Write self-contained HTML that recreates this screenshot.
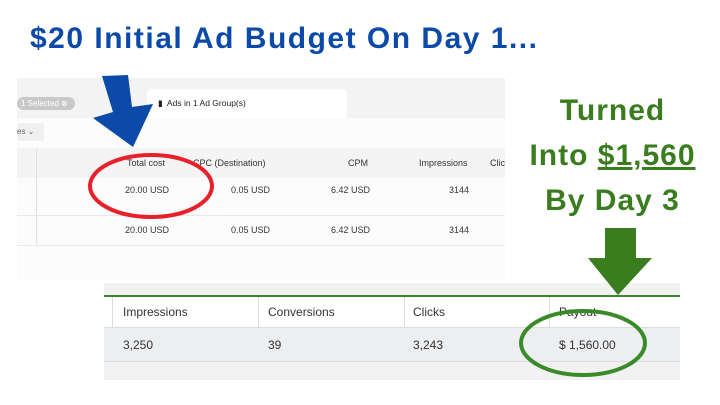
<html><head><style>
body{margin:0;width:720px;height:405px;background:#fff;position:relative;overflow:hidden;font-family:"Liberation Sans",sans-serif}
.a{position:absolute}
.t{font-size:9px;color:#333}
.b{font-size:12px;color:#333}
</style></head><body>
<div class="a" style="left:17px;top:78px;width:488px;height:40px;background:#f3f3f3"></div>
<div class="a" style="left:17px;top:97px;width:58px;height:13px;border-radius:7px;background:#c9c9c9;color:#fff;font-size:8px;line-height:13px;padding-left:4px;box-sizing:border-box">1 Selected ⊗</div>
<div class="a" style="left:147px;top:89px;width:200px;height:29px;background:#fff;border-radius:5px 5px 0 0"></div>
<div class="a t" style="left:158px;top:98px;font-size:8.5px;color:#222">▮&nbsp; Ads in 1 Ad Group(s)</div>
<div class="a" style="left:17px;top:118px;width:488px;height:162px;background:#fcfcfc"></div>
<div class="a" style="left:17px;top:123px;width:27px;height:18px;background:#f0f0f0;border-radius:3px;font-size:8px;color:#666;line-height:18px">es ⌄</div>
<div class="a" style="left:17px;top:148px;width:488px;height:30px;background:#f4f4f4"></div>
<div class="a" style="left:36px;top:148px;width:1px;height:97px;background:#e2e2e2"></div>
<div class="a" style="left:17px;top:215px;width:488px;height:1px;background:#e8e8e8"></div>
<div class="a" style="left:17px;top:245px;width:488px;height:1px;background:#e8e8e8"></div>
<div class="a t" style="left:127px;top:158px">Total cost</div>
<div class="a t" style="left:193px;top:158px">CPC (Destination)</div>
<div class="a t" style="left:348px;top:158px">CPM</div>
<div class="a t" style="left:419px;top:158px">Impressions</div>
<div class="a t" style="left:490px;top:158px">Clic</div>
<div class="a t" style="left:125px;top:185px">20.00 USD</div>
<div class="a t" style="left:231px;top:185px">0.05 USD</div>
<div class="a t" style="left:331px;top:185px">6.42 USD</div>
<div class="a t" style="left:449px;top:185px">3144</div>
<div class="a t" style="left:125px;top:225px">20.00 USD</div>
<div class="a t" style="left:231px;top:225px">0.05 USD</div>
<div class="a t" style="left:331px;top:225px">6.42 USD</div>
<div class="a t" style="left:449px;top:225px">3144</div>

<div class="a" style="left:104px;top:283px;width:576px;height:97px;background:#f2f2f2"></div>
<div class="a" style="left:104px;top:295px;width:576px;height:2px;background:#3a8a2a"></div>
<div class="a" style="left:104px;top:297px;width:576px;height:30px;background:#fff"></div>
<div class="a" style="left:104px;top:327px;width:576px;height:33px;background:#edeef0;border-top:1px solid #ddd;border-bottom:1px solid #ddd"></div>
<div class="a" style="left:112px;top:297px;width:1px;height:30px;background:#ddd"></div>
<div class="a" style="left:258px;top:297px;width:1px;height:30px;background:#ddd"></div>
<div class="a" style="left:404px;top:297px;width:1px;height:30px;background:#ddd"></div>
<div class="a" style="left:549px;top:297px;width:1px;height:30px;background:#ddd"></div>
<div class="a b" style="left:123px;top:305px">Impressions</div>
<div class="a b" style="left:268px;top:305px">Conversions</div>
<div class="a b" style="left:413px;top:305px">Clicks</div>
<div class="a b" style="left:559px;top:305px">Payout</div>
<div class="a b" style="left:123px;top:338px">3,250</div>
<div class="a b" style="left:268px;top:338px">39</div>
<div class="a b" style="left:413px;top:338px">3,243</div>
<div class="a b" style="left:559px;top:338px">$ 1,560.00</div>

<div class="a" style="left:30px;top:22px;font-size:30px;font-weight:bold;color:#0b4aa8;white-space:nowrap;letter-spacing:1.5px">$20 Initial Ad Budget On Day 1...</div>
<div class="a" style="left:505px;top:88px;width:215px;text-align:center;font-size:30px;font-weight:bold;color:#3a7d1e;line-height:45px;letter-spacing:1px">Turned<br>Into <u>$1,560</u><br>By Day 3</div>

<svg class="a" style="left:0;top:0" width="720" height="405">
<polygon points="102,76 128,75 132,107 153,104 133,147 93,118 113,112" fill="#0b4aa8"/>
<polygon points="605,228 636,228 636,258 652,258 618,295 588,258 605,258" fill="#3a7d1e"/>
<ellipse cx="151" cy="186" rx="61" ry="31" fill="none" stroke="#e8202a" stroke-width="4"/>
<ellipse cx="583" cy="343" rx="62" ry="32" fill="none" stroke="#3a8a2a" stroke-width="4"/>
</svg>
</body></html>
